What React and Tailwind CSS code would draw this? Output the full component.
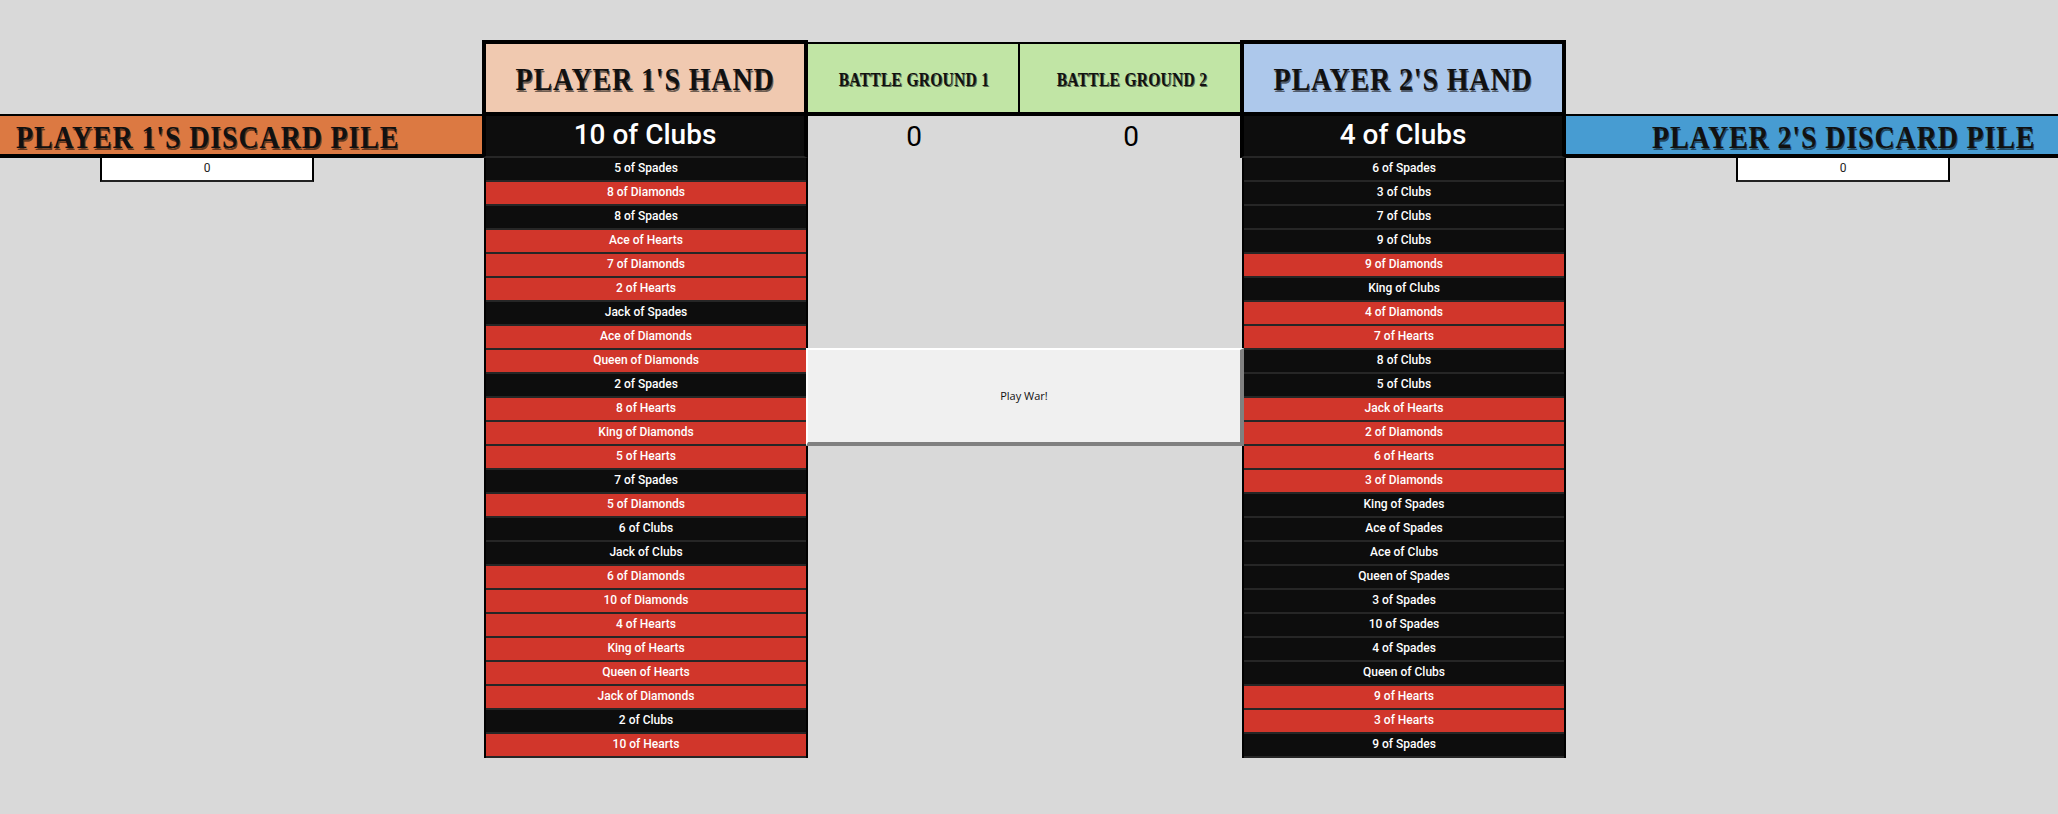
const player1 = [
  '5 of Spades', '8 of Diamonds', '8 of Spades', 'Ace of Hearts', '7 of Diamonds', '2 of Hearts', 'Jack of Spades',
  'Ace of Diamonds', 'Queen of Diamonds', '2 of Spades', '8 of Hearts', 'King of Diamonds', '5 of Hearts', '7 of Spades',
  '5 of Diamonds', '6 of Clubs', 'Jack of Clubs', '6 of Diamonds', '10 of Diamonds', '4 of Hearts', 'King of Hearts',
  'Queen of Hearts', 'Jack of Diamonds', '2 of Clubs', '10 of Hearts',
];

const player2 = [
  '6 of Spades', '3 of Clubs', '7 of Clubs', '9 of Clubs', '9 of Diamonds', 'King of Clubs', '4 of Diamonds',
  '7 of Hearts', '8 of Clubs', '5 of Clubs', 'Jack of Hearts', '2 of Diamonds', '6 of Hearts', '3 of Diamonds',
  'King of Spades', 'Ace of Spades', 'Ace of Clubs', 'Queen of Spades', '3 of Spades', '10 of Spades', '4 of Spades',
  'Queen of Clubs', '9 of Hearts', '3 of Hearts', '9 of Spades',
];

const isRed = (card) => card.includes('Hearts') || card.includes('Diamonds');

function Title({ children, small }) {
  return (
    <span
      className={`inline-block whitespace-nowrap font-['Liberation_Serif',serif] font-bold text-[#111] [text-shadow:1px_1px_0_rgba(0,0,0,0.55)] ${
        small ? 'scale-y-[1.2] text-[15.5px] tracking-[0.3px]' : 'scale-y-[1.15] text-[28px] tracking-[0.85px]'
      }`}
    >
      {children}
    </span>
  );
}

function Hand({ title, current, cards, headerBg }) {
  return (
    <div className="flex flex-col pt-[40px]">
      <div className={`flex h-[76px] items-center justify-center border-4 border-black pt-[4px] ${headerBg}`}>
        <Title>{title}</Title>
      </div>
      <div className="flex h-[42px] items-center justify-center border-x-4 border-b-2 border-x-black border-b-[#262626] bg-[#0d0d0d] pb-[2px] font-['Roboto',sans-serif] text-[28px] font-medium text-white">
        {current}
      </div>
      <div className="ml-[2px] border-x-2 border-black">
        {cards.map((card) => (
          <div
            key={card}
            className={`flex h-[24px] items-center justify-center border-b-2 border-[#262626] pb-[3px] font-['Roboto',sans-serif] text-[12px] font-medium text-white ${
              isRed(card) ? 'bg-[#d1362b]' : 'bg-[#0d0d0d]'
            }`}
          >
            {card}
          </div>
        ))}
      </div>
    </div>
  );
}

function Discard({ title, bg, textPad, boxPad }) {
  return (
    <div className="flex flex-col pt-[114px]">
      <div className={`flex h-[44px] items-center border-t-2 border-b-4 border-black pt-[5px] ${bg} ${textPad}`}>
        <Title>{title}</Title>
      </div>
      <div className={boxPad}>
        <div className="flex h-[24px] w-[214px] items-center justify-center border-x-2 border-b-2 border-x-black border-b-[#222] bg-white pb-[2px] font-['Roboto',sans-serif] text-[12px] text-[#222]">
          0
        </div>
      </div>
    </div>
  );
}

export default function App() {
  return (
    <div className="grid h-[814px] grid-cols-[482px_326px_432px_326px_492px] overflow-hidden bg-[#d9d9d9]">
      <Discard title="PLAYER 1'S DISCARD PILE" bg="bg-[#dc7942]" textPad="pl-[16px]" boxPad="pl-[100px]" />

      <Hand title="PLAYER 1'S HAND" current="10 of Clubs" cards={player1} headerBg="bg-[#f0c9b0]" />

      <div className="flex flex-col pt-[42px]">
        <div className="grid h-[74px] grid-cols-[210px_220px] gap-x-[2px] border-t-2 border-b-4 border-black bg-black">
          <div className="flex items-center justify-center bg-[#c1e5a5] pt-[3px] pl-[2px]">
            <Title small>BATTLE GROUND 1</Title>
          </div>
          <div className="flex items-center justify-center bg-[#c1e5a5] pt-[3px] pl-[4px]">
            <Title small>BATTLE GROUND 2</Title>
          </div>
        </div>
        <div className="grid h-[42px] grid-cols-[210px_222px] font-['Roboto',sans-serif] text-[28px] text-black">
          <div className="flex items-center justify-center pb-[2px] pl-[2px]">0</div>
          <div className="flex items-center justify-center pb-[2px] pl-[4px]">0</div>
        </div>
        <button className="relative z-10 -mr-[4px] -ml-[2px] mt-[190px] flex h-[98px] items-center justify-center border-t-2 border-r-4 border-b-4 border-l-2 border-t-white border-r-[#808080] border-b-[#808080] border-l-white bg-[#f0f0f0] font-['Open_Sans',sans-serif] text-[11px] text-[#111]">
          Play War!
        </button>
      </div>

      <Hand title="PLAYER 2'S HAND" current="4 of Clubs" cards={player2} headerBg="bg-[#adc8eb]" />

      <Discard title="PLAYER 2'S DISCARD PILE" bg="bg-[#479cd2]" textPad="pl-[86px]" boxPad="pl-[170px]" />
    </div>
  );
}
